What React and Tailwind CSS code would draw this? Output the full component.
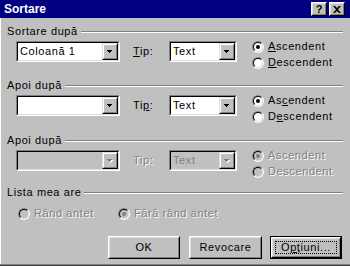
import React from "react";

const F = { fontFamily: '"Liberation Sans", Arial, sans-serif' };

function DropBtn({ disabled }) {
  return (
    <div className="w-[16px] h-full shrink-0 border border-t-[#dfdfdf] border-l-[#dfdfdf] border-b-black border-r-black">
      <div className="w-full h-full bg-[#c0c0c0] border border-t-white border-l-white border-b-[#808080] border-r-[#808080] flex items-center justify-center">
        <svg width="8" height="5" viewBox="0 0 8 5" className="overflow-visible">
          {disabled && <path d="M2 2h5v1h-1v1h-1v1h-1z" fill="#ffffff" />}
          <path d="M1 1h5v1h-1v1h-1v1h-1v-1h-1v-1h-1z" fill={disabled ? "#808080" : "#000"} />
        </svg>
      </div>
    </div>
  );
}

function Combo({ className, value, disabled }) {
  return (
    <div className={`h-[21px] shrink-0 border border-t-[#808080] border-l-[#808080] border-b-white border-r-white ${className}`}>
      <div className={`h-full flex border border-t-black border-l-black border-b-[#dfdfdf] border-r-[#dfdfdf] ${disabled ? "bg-[#c0c0c0]" : "bg-white"}`}>
        <div className={`flex-1 pl-[2px] text-[11px] leading-[17px] whitespace-nowrap overflow-hidden ${disabled ? "text-[#808080]" : "text-black"}`}>{value}</div>
        <DropBtn disabled={disabled} />
      </div>
    </div>
  );
}

function Radio({ checked, disabled }) {
  return (
    <div className="w-[12px] h-[12px] shrink-0 rounded-full border border-t-[#808080] border-l-[#808080] border-b-white border-r-white">
      <div className={`w-full h-full rounded-full border border-t-black border-l-black border-b-[#dfdfdf] border-r-[#dfdfdf] flex items-center justify-center ${disabled ? "bg-[#c0c0c0]" : "bg-white"}`}>
        {checked && <div className={`w-[4px] h-[4px] rounded-full ${disabled ? "bg-[#808080]" : "bg-black"}`} />}
      </div>
    </div>
  );
}

function RadioRow({ checked, disabled, children }) {
  return (
    <div className="flex items-center h-[13px]">
      <Radio checked={checked} disabled={disabled} />
      <span className={`ml-[4px] text-[11px] leading-[13px] whitespace-nowrap ${disabled ? "text-[#808080] [text-shadow:1px_1px_0_#fff]" : "text-black"}`}>{children}</span>
    </div>
  );
}

function Header({ children, className }) {
  return (
    <div className={`flex items-center h-[13px] pl-[7px] pr-[7px] ${className}`}>
      <span className="text-[11px] leading-[13px] text-black whitespace-nowrap">{children}</span>
      <div className="flex-1 ml-[3px] h-[2px] border-t border-t-[#808080] border-b border-b-white" />
    </div>
  );
}

function Section({ className, col, tip, asc, desc, disabled }) {
  return (
    <div className={`flex items-start ${className}`}>
      <Combo className="ml-[16px] w-[104px]" value={col} disabled={disabled} />
      <div className={`w-[36px] ml-[13px] h-[21px] flex items-center text-[11px] ${disabled ? "text-[#808080] [text-shadow:1px_1px_0_#fff]" : "text-black"}`}>{tip}</div>
      <Combo className="w-[68px]" value="Text" disabled={disabled} />
      <div className="ml-[15px] -mt-[1px] flex flex-col gap-[3px]">
        <RadioRow checked disabled={disabled}>{asc}</RadioRow>
        <RadioRow disabled={disabled}>{desc}</RadioRow>
      </div>
    </div>
  );
}

function Btn({ children, def, className }) {
  const inner = (
    <div className="w-full h-full border border-t-white border-l-white border-b-black border-r-black">
      <div className="w-full h-full border border-t-[#dfdfdf] border-l-[#dfdfdf] border-b-[#808080] border-r-[#808080] flex items-center justify-center p-[2px]">
        {def ? (
          <div className="w-full h-full border border-dotted border-black flex items-center justify-center text-[11px] text-black">{children}</div>
        ) : (
          <span className="text-[11px] text-black">{children}</span>
        )}
      </div>
    </div>
  );
  return (
    <div className={`h-[23px] shrink-0 ${def ? "border border-black" : ""} ${className}`}>{inner}</div>
  );
}

export default function App() {
  return (
    <div className="w-[350px] h-[266px] bg-[#c0c0c0] flex flex-col overflow-hidden select-none tracking-[0.6px]" style={F}>
      <div className="h-[18px] bg-[#000080] flex items-center pl-[4px] pr-[5px] shrink-0">
        <span className="text-white font-bold text-[12px] leading-[14px] flex-1 tracking-normal">Sortare</span>
        <div className="flex gap-[2px]">
          {["?", "X"].map((c) => (
            <div key={c} className="w-[16px] h-[14px] border border-t-white border-l-white border-b-black border-r-black bg-[#c0c0c0]">
              <div className="w-full h-full border border-t-[#dfdfdf] border-l-[#dfdfdf] border-b-[#808080] border-r-[#808080] flex items-center justify-center">
                {c === "?" ? (
                  <span className="text-[11px] font-bold leading-[11px] text-black tracking-normal">?</span>
                ) : (
                  <svg width="8" height="7" viewBox="0 0 8 7"><path d="M0 0h2l2 2 2-2h2l-3 3.5 3 3.5h-2l-2-2-2 2h-2l3-3.5z" fill="#000" /></svg>
                )}
              </div>
            </div>
          ))}
        </div>
      </div>
      <div className="flex-1 flex flex-col shadow-[inset_1px_0_0_#ffffff]">
        <Header className="mt-[7px]">Sortare după</Header>
        <Section
          className="mt-[3px]"
          col="Coloană 1"
          tip={<span><u>T</u>ip:</span>}
          asc={<span><u>A</u>scendent</span>}
          desc={<span><u>D</u>escendent</span>}
        />
        <Header className="mt-[10px]">Apoi după</Header>
        <Section
          className="mt-[3px]"
          col=""
          tip={<span>Ti<u>p</u>:</span>}
          asc={<span>As<u>c</u>endent</span>}
          desc={<span>D<u>e</u>scendent</span>}
        />
        <Header className="mt-[11px]">Apoi după</Header>
        <Section className="mt-[3px]" col="" tip="Tip:" asc="Ascendent" desc="Descendent" disabled />
        <Header className="mt-[8px]">Lista mea are</Header>
        <div className="flex mt-[8px] h-[13px]">
          <div className="ml-[18px] w-[100px]">
            <RadioRow disabled>Rând antet</RadioRow>
          </div>
          <RadioRow checked disabled>Fără rând antet</RadioRow>
        </div>
        <div className="flex mt-[16px]">
          <Btn className="ml-[108px] w-[72px]">OK</Btn>
          <Btn className="ml-[9px] w-[73px]">Revocare</Btn>
          <Btn def className="ml-[8px] w-[72px]"><span>O<u>p</u>țiuni...</span></Btn>
        </div>
      </div>
      <div className="h-[2px] shrink-0 border-t border-t-[#808080] border-b border-b-[#404040]" />
    </div>
  );
}
